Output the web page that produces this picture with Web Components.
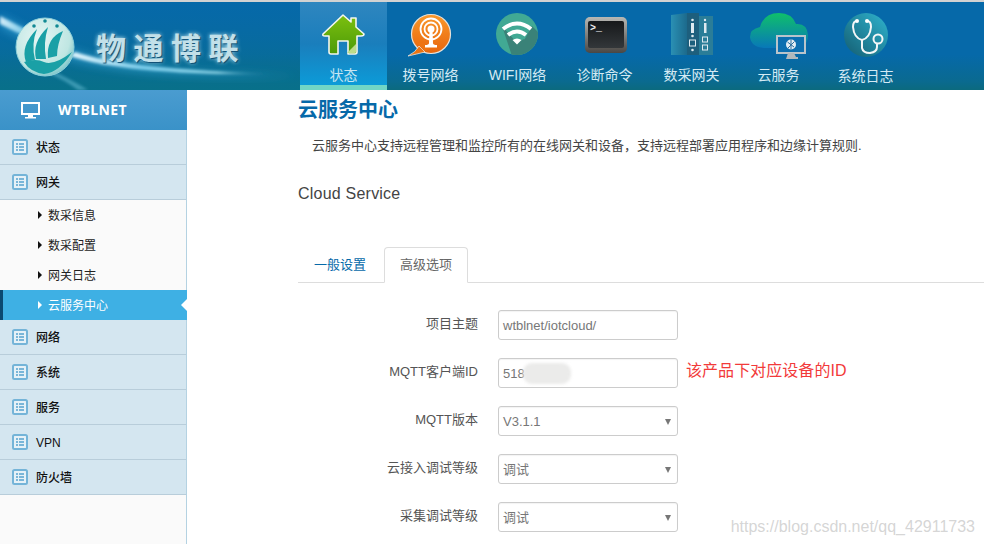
<!DOCTYPE html>
<html lang="zh">
<head>
<meta charset="utf-8">
<title>云服务中心</title>
<style>
  html, body { margin: 0; padding: 0; height: 100%; overflow: hidden; background: #fff; }
  body { font-family: "Liberation Sans", "Noto Sans CJK SC", sans-serif; }
</style>
</head>
<body>
<wt-app>
  <wt-header slot="header">
    <wt-nav-item label="状态" active>
      <svg viewBox="0 0 87 60" width="87" height="60">
        <defs><linearGradient id="h" x1="0" y1="0" x2="0" y2="1"><stop offset="0" stop-color="#7cc00f"/><stop offset="1" stop-color="#4c9a08"/></linearGradient></defs>
        <path d="M43 13 L51 20 V16 H56 V25 L64 32 Q64 34 61 34 H57 V50 Q57 52 55 52 H48 V39 H38 V52 H31 Q29 52 29 50 V34 H25 Q22 34 23 32 Z" fill="url(#h)" stroke="#f4f6ee" stroke-width="1.6" stroke-linejoin="round"/>
        <path d="M47 51 L56 42 V50 Q56 51 55 51 Z" fill="#bcdc8a"/>
      </svg>
    </wt-nav-item>
    <wt-nav-item label="拨号网络">
      <svg viewBox="0 0 87 60" width="87" height="60">
        <defs><linearGradient id="o" x1="0" y1="0" x2="0" y2="1"><stop offset="0" stop-color="#f9982a"/><stop offset="1" stop-color="#e8650c"/></linearGradient></defs>
        <circle cx="44" cy="32" r="19.500" fill="url(#o)" stroke="#e6e2da" stroke-width="1.200"/>
        <path d="M21 54 Q29 50 32 44 L38 50 Q30 52 21 54 Z" fill="#ee7412" stroke="#e6e2da" stroke-width=".8"/>
        <path d="M31 42 L38 49 L44 46 L33 38 Z" fill="#ee7412"/>
        <g fill="none" stroke="#fff" stroke-width="1.800">
          <circle cx="44" cy="27" r="10.500"/><circle cx="44" cy="27" r="6.500"/>
        </g>
        <circle cx="44" cy="27" r="3.500" fill="#fff"/>
        <path d="M42.500 28 H45.500 L46 41 Q46 43 50 43 V45.500 H38 V43 Q42 43 42 41 Z" fill="#fff"/>
      </svg>
    </wt-nav-item>
    <wt-nav-item label="WIFI网络">
      <svg viewBox="0 0 87 60" width="87" height="60">
        <clipPath id="wc"><circle cx="43" cy="32" r="21"/></clipPath>
        <circle cx="43" cy="32" r="21" fill="#41a994"/>
        <path d="M28 24 L43 41 L50 37 L70 55 L40 60 Z M58 24 L70 36 V56 L48 42 Z" fill="#3a8278" clip-path="url(#wc)"/>
        <g fill="none" stroke="#fff" stroke-linecap="butt">
          <path d="M29 27 Q43 16 57 27" stroke-width="4"/>
          <path d="M34 33 Q43 26 52 33" stroke-width="4"/>
        </g>
        <path d="M38.500 38 Q43 35 47.500 38 L43 42.500 Z" fill="#fff"/>
      </svg>
    </wt-nav-item>
    <wt-nav-item label="诊断命令">
      <svg viewBox="0 0 87 60" width="87" height="60">
        <defs><linearGradient id="t" x1="0" y1="0" x2="0" y2="1"><stop offset="0" stop-color="#b8b8b4"/><stop offset="1" stop-color="#4a4744"/></linearGradient>
        <linearGradient id="t2" x1="0" y1="0" x2="0" y2="1"><stop offset="0" stop-color="#16181a"/><stop offset="1" stop-color="#33373a"/></linearGradient></defs>
        <rect x="24" y="15" width="42" height="36" rx="5" fill="url(#t)"/>
        <rect x="27" y="19" width="36" height="27" rx="2" fill="url(#t2)"/>
        <text x="29" y="29" font-family="Liberation Mono" font-size="10" font-weight="700" fill="#eee">&gt;_</text>
      </svg>
    </wt-nav-item>
    <wt-nav-item label="数采网关">
      <svg viewBox="0 0 87 60" width="87" height="60">
        <defs><linearGradient id="g" x1="0" y1="0" x2="1" y2="0"><stop offset="0" stop-color="#2a90b4"/><stop offset="1" stop-color="#1c6a8c"/></linearGradient></defs>
        <path d="M23 13 L39 11 V53 L23 53 Z" fill="url(#g)"/>
        <rect x="39" y="11" width="12" height="42" fill="#1d5f7d"/>
        <rect x="51" y="14" width="14" height="39" fill="#2a7d98"/>
        <g fill="#dfeaf0">
          <rect x="43" y="21" width="3" height="10"/><circle cx="44.500" cy="18" r="1.300"/><circle cx="44.500" cy="34" r="1.300"/>
          <rect x="41.500" y="38" width="6" height="6" fill="none" stroke="#dfeaf0"/><circle cx="44.500" cy="48" r="1.300"/>
          <rect x="56" y="21" width="2.500" height="10"/><circle cx="57" cy="18" r="1.200"/>
          <rect x="54.500" y="35" width="5" height="5" fill="none" stroke="#dfeaf0"/><rect x="54.500" y="43" width="5" height="5" fill="none" stroke="#dfeaf0"/>
        </g>
      </svg>
    </wt-nav-item>
    <wt-nav-item label="云服务">
      <svg viewBox="0 0 87 60" width="87" height="60">
        <defs><linearGradient id="c" x1="0" y1="0" x2="0" y2="1"><stop offset="0" stop-color="#0fc06a"/><stop offset="1" stop-color="#0878b8"/></linearGradient></defs>
        <path d="M29 46 Q16 45 15 35 Q15 27 25 25 Q29 11 44 11 Q57 11 61 22 Q72 21 73 33 Q73 41 68 44 L43 46 Z" fill="url(#c)"/>
        <rect x="42" y="34" width="28" height="17" fill="#0c6fb0" stroke="#b9c4cb" stroke-width="2"/>
        <path d="M51 57 L53 51 H59 L61 55 H63 V57 Z" fill="#b0b8bc"/>
        <circle cx="56" cy="42.500" r="5" fill="#e4eef4"/>
        <path d="M52.500 40 L59 45 M59.500 39.500 L53 46 M56 37.500 V47.500" stroke="#2a6e9e" stroke-width="1"/>
      </svg>
    </wt-nav-item>
    <wt-nav-item label="系统日志" drop>
      <svg viewBox="0 0 87 60" width="87" height="60">
        <defs><linearGradient id="s" x1="0" y1="1" x2="1" y2="0"><stop offset="0" stop-color="#145c70"/><stop offset="1" stop-color="#2fb4cf"/></linearGradient></defs>
        <circle cx="44" cy="33" r="22" fill="url(#s)"/>
        <g fill="none" stroke="#f2f6f7" stroke-width="2">
          <path d="M35 19 Q31 19 31 25 Q32 36 40 38 Q48 36 49 25 Q49 19 45 19"/>
          <path d="M40 38 V46 Q41 51 48 51 Q55 50 55 45 V42"/>
          <circle cx="56" cy="37" r="4.500"/>
        </g>
        <circle cx="35" cy="19" r="2" fill="#fff"/><circle cx="45" cy="19" r="2" fill="#fff"/>
      </svg>
    </wt-nav-item>
  </wt-header>

  <wt-sidebar slot="sidebar" title="WTBLNET">
    <wt-menu-item>状态</wt-menu-item>
    <wt-menu-item>网关</wt-menu-item>
    <wt-sub-item>数采信息</wt-sub-item>
    <wt-sub-item>数采配置</wt-sub-item>
    <wt-sub-item>网关日志</wt-sub-item>
    <wt-sub-item active>云服务中心</wt-sub-item>
    <wt-menu-item>网络</wt-menu-item>
    <wt-menu-item>系统</wt-menu-item>
    <wt-menu-item>服务</wt-menu-item>
    <wt-menu-item>VPN</wt-menu-item>
    <wt-menu-item>防火墙</wt-menu-item>
  </wt-sidebar>

  <wt-content slot="content" heading="云服务中心" intro="云服务中心支持远程管理和监控所有的在线网关和设备，支持远程部署应用程序和边缘计算规则." section="Cloud Service">
    <wt-tabs first="一般设置" second="高级选项"></wt-tabs>
    <wt-form-row label="项目主题"><wt-field>wtblnet/iotcloud/</wt-field></wt-form-row>
    <wt-form-row label="MQTT客户端ID" note="该产品下对应设备的ID"><wt-field smudge>518</wt-field></wt-form-row>
    <wt-form-row label="MQTT版本"><wt-field select>V3.1.1</wt-field></wt-form-row>
    <wt-form-row label="云接入调试等级"><wt-field select>调试</wt-field></wt-form-row>
    <wt-form-row label="采集调试等级"><wt-field select>调试</wt-field></wt-form-row>
  </wt-content>
  <wt-watermark slot="overlay">https://blog.csdn.net/qq_42911733</wt-watermark>
</wt-app>

<script>
const CJK = `"Liberation Sans", "Noto Sans CJK SC", sans-serif`;

class WtApp extends HTMLElement {
  constructor() {
    super();
    this.attachShadow({ mode: "open" }).innerHTML = `
      <style>
        :host { display: grid; grid-template-columns: 187px 1fr; grid-template-rows: 88px 1fr; height: 544px; border-top: 2px solid #d2d2d2; box-sizing: border-box; position: relative; overflow: hidden; }
        .top { grid-column: 1 / 3; }
        .main { min-width: 0; }
      </style>
      <div class="top"><slot name="header"></slot></div>
      <slot name="sidebar"></slot>
      <div class="main"><slot name="content"></slot></div>
      <slot name="overlay"></slot>`;
  }
}

class WtHeader extends HTMLElement {
  constructor() {
    super();
    this.attachShadow({ mode: "open" }).innerHTML = `
      <style>
        :host { display: flex; height: 88px; position: relative; background: linear-gradient(#0669a9 0, #0669a9 60%, #0a6a90 90%, #0b6a7e 100%); }
        .logo { width: 300px; flex: none; position: relative; }
        .logo svg { display: block; }
        .brand { position: absolute; left: 96px; top: 24px; font: 700 30px/40px "Noto Sans CJK SC", sans-serif; letter-spacing: 7.500px; color: #c2e0e9; white-space: nowrap; text-shadow: 1px 1px 1px #0a4a70, 0 0 4px #d0eef5; }
        nav { display: flex; }
      </style>
      <div class="logo">
        <svg viewBox="0 0 300 88" width="300" height="88">
          <defs>
            <linearGradient id="sw" x1="0" y1="0" x2="1" y2="0">
              <stop offset="0" stop-color="#e8f8ff"/><stop offset=".35" stop-color="#7fd0ee"/><stop offset=".7" stop-color="#a0e0f0"/><stop offset="1" stop-color="#0a6a90" stop-opacity="0"/>
            </linearGradient>
            <radialGradient id="ball" cx=".4" cy=".35" r=".75">
              <stop offset="0" stop-color="#e6f6f4"/><stop offset=".7" stop-color="#bfe6e2"/><stop offset="1" stop-color="#5fb8c0"/>
            </radialGradient>
            <linearGradient id="bot" x1="0" y1="0" x2="0" y2="1"><stop offset="0" stop-color="#0a6a9e" stop-opacity="0"/><stop offset="1" stop-color="#08708a"/></linearGradient>
            <filter id="bl"><feGaussianBlur stdDeviation="1.500"/></filter>
            <filter id="bl2"><feGaussianBlur stdDeviation="4"/></filter>
          </defs>
          <rect width="300" height="88" fill="url(#bot)"/>
          <path d="M0 12 Q50 40 80 50 Q140 70 300 74 Q140 78 70 58 Q30 42 0 26 Z" fill="#38a6d8" opacity=".55" filter="url(#bl2)"/>
          <path d="M0 14 Q40 36 75 46 L70 50 Q30 38 0 22 Z" fill="url(#sw)" opacity=".9" filter="url(#bl)"/>
          <path d="M75 50 Q130 68 280 72 Q130 74 70 54 Z" fill="url(#sw)" filter="url(#bl)"/>
          <path d="M55 70 Q75 80 88 88 H78 Q65 78 50 72 Z" fill="#6fc4dc" opacity=".5" filter="url(#bl)"/>
          <circle cx="45" cy="45" r="29" fill="url(#ball)" stroke="#8fd0da" stroke-width="1"/>
          <g fill="#1aa0a6">
            <path d="M26 60 Q20 44 37 27 Q31 42 35 58 Z" />
            <path d="M36 57 Q32 40 48 25 Q43 41 46 57 Z"/>
            <path d="M48 56 Q46 36 63 29 Q57 43 57 54 Z"/>
            <path d="M24 60 Q36 56 44 60 Q54 64 72 50 Q60 70 44 72 Q30 70 24 60 Z"/>
          </g>
          <g fill="#128a94"><circle cx="34" cy="24" r="1.800"/><circle cx="45" cy="19" r="1.800"/><circle cx="57" cy="24" r="1.800"/></g>
        </svg>
        <div class="brand">物通博联</div>
      </div>
      <nav><slot></slot></nav>`;
  }
}

class WtNavItem extends HTMLElement {
  constructor() {
    super();
    this.attachShadow({ mode: "open" }).innerHTML = `
      <style>
        :host { display: flex; flex-direction: column; align-items: center; width: 87px; height: 88px; box-sizing: border-box; color: #d4eaf4; font: 14px/18px ${CJK}; }
        :host([active]) { background: linear-gradient(180deg, #2f86bf 0, #1a7ebc 50%, #0c9bd8 83px); border-bottom: 5px solid #70d6c6; color: #c8e6f2; }
        ::slotted(svg) { display: block; }
        .label { margin-top: 4px; white-space: nowrap; }
        :host([drop]) .label { margin-top: 5px; }
        .icon { height: 60px; }
      </style>
      <div class="icon"><slot></slot></div>
      <div class="label"></div>`;
  }
  connectedCallback() {
    this.shadowRoot.querySelector(".label").textContent = this.getAttribute("label");
  }
}

class WtSidebar extends HTMLElement {
  constructor() {
    super();
    this.attachShadow({ mode: "open" }).innerHTML = `
      <style>
        :host { display: block; background: #fafafa; border-right: 1px solid #b4d2e2; box-sizing: border-box; width: 187px; }
        .head { display: flex; align-items: center; height: 40px; margin-right: -1px; padding-left: 21px; gap: 18px; background: linear-gradient(#4a9cd0, #3a92c8); color: #fff; font: 700 14px/1 "Open Sans", sans-serif; letter-spacing: .4px; box-sizing: border-box; }
        svg { display: block; }
      </style>
      <div class="head">
        <svg width="19" height="17" viewBox="0 0 19 17"><path d="M1 1 H18 V12 H1 Z" fill="none" stroke="#fff" stroke-width="2"/><path d="M7 13 H12 V15 H15 V16.500 H4 V15 H7 Z" fill="#fff"/></svg>
        <span class="title"></span>
      </div>
      <slot></slot>`;
  }
  connectedCallback() {
    this.shadowRoot.querySelector(".title").textContent = this.getAttribute("title");
  }
}

class WtMenuItem extends HTMLElement {
  constructor() {
    super();
    this.attachShadow({ mode: "open" }).innerHTML = `
      <style>
        :host { display: flex; align-items: center; height: 35px; box-sizing: border-box; padding-left: 12px; gap: 8px; background: #d4e6f0; border-bottom: 1px solid #b8cdda; color: #111; font: 500 12px/1 ${CJK}; }
        svg { display: block; flex: none; }
        span { margin-top: 2px; }
      </style>
      <svg width="16" height="16" viewBox="0 0 16 16">
        <rect x="1" y="1" width="14" height="14" rx="1.500" fill="#e6f1f7" stroke="#74b4d8" stroke-width="2"/>
        <g fill="#7ab6d8"><rect x="4" y="4" width="2" height="2"/><rect x="7" y="4" width="5" height="2"/><rect x="4" y="7" width="2" height="2"/><rect x="7" y="7" width="5" height="2"/><rect x="4" y="10" width="2" height="2"/><rect x="7" y="10" width="5" height="2"/></g>
      </svg>
      <span><slot></slot></span>`;
  }
}

class WtSubItem extends HTMLElement {
  constructor() {
    super();
    this.attachShadow({ mode: "open" }).innerHTML = `
      <style>
        :host { display: flex; align-items: center; height: 30px; box-sizing: border-box; padding-left: 38px; gap: 6px; color: #222; font: 12px/1 ${CJK}; position: relative; }
        .text { margin-top: 2px; }
        .tri { width: 0; height: 0; border-left: 4px solid #111; border-top: 4px solid transparent; border-bottom: 4px solid transparent; }
        :host([active]) { background: #3eb0e4; color: #fff; padding-left: 35px; border-left: 3px solid #0b4a72; margin-right: -1px; }
        :host([active]) .tri { border-left-color: #fff; }
        .notch { display: none; position: absolute; right: 0; top: 9px; border-right: 6px solid #fff; border-top: 6px solid transparent; border-bottom: 6px solid transparent; }
        :host([active]) .notch { display: block; }
      </style>
      <span class="tri"></span><span class="text"><slot></slot></span><span class="notch"></span>`;
  }
}

class WtContent extends HTMLElement {
  constructor() {
    super();
    this.attachShadow({ mode: "open" }).innerHTML = `
      <style>
        :host { display: block; padding-left: 111px; color: #444; font-family: ${CJK}; }
        h1 { margin: 0; padding-top: 6px; font: 700 20px/28px ${CJK}; color: #0669a9; }
        p { margin: 13px 0 0 14px; font-size: 13px; line-height: 18px; color: #444; white-space: nowrap; }
        h2 { margin: 29px 0 0; font: 400 16px/20px "Liberation Sans", sans-serif; letter-spacing: .22px; color: #444; }
      </style>
      <h1></h1><p></p><h2></h2>
      <slot></slot>`;
  }
  connectedCallback() {
    const r = this.shadowRoot;
    r.querySelector("h1").textContent = this.getAttribute("heading");
    r.querySelector("p").textContent = this.getAttribute("intro");
    r.querySelector("h2").textContent = this.getAttribute("section");
  }
}

class WtTabs extends HTMLElement {
  constructor() {
    super();
    this.attachShadow({ mode: "open" }).innerHTML = `
      <style>
        :host { display: flex; align-items: flex-end; height: 36px; margin: 42px 0 27px; border-bottom: 1px solid #ddd; font: 13px/1 ${CJK}; box-sizing: content-box; }
        .tab { box-sizing: border-box; padding: 0 15px 2px; height: 36px; display: flex; align-items: center; color: #0669a9; border: 1px solid transparent; margin-bottom: -1px; margin-right: 2px; }
        .on { color: #666; background: #fff; border-color: #ddd; border-bottom-color: #fff; border-radius: 4px 4px 0 0; }
      </style>
      <div class="tab"></div><div class="tab on"></div>`;
  }
  connectedCallback() {
    const t = this.shadowRoot.querySelectorAll(".tab");
    t[0].textContent = this.getAttribute("first");
    t[1].textContent = this.getAttribute("second");
  }
}

class WtFormRow extends HTMLElement {
  constructor() {
    super();
    this.attachShadow({ mode: "open" }).innerHTML = `
      <style>
        :host { display: grid; grid-template-columns: 180px 180px auto; column-gap: 20px; align-items: center; height: 30px; margin-bottom: 18px; }
        .label { text-align: right; font: 13px/18px ${CJK}; color: #555; margin-top: -2px; white-space: nowrap; }
        .note { margin-left: -12px; margin-top: -5px; font: 16px/20px ${CJK}; color: #f23a3a; white-space: nowrap; letter-spacing: .05px; }
      </style>
      <div class="label"></div><slot></slot><div class="note"></div>`;
  }
  connectedCallback() {
    const r = this.shadowRoot;
    r.querySelector(".label").textContent = this.getAttribute("label");
    r.querySelector(".note").textContent = this.getAttribute("note") || "";
  }
}

class WtField extends HTMLElement {
  constructor() {
    super();
    this.attachShadow({ mode: "open" }).innerHTML = `
      <style>
        :host { display: flex; align-items: center; position: relative; box-sizing: border-box; width: 180px; height: 30px; padding: 0 4px; background: #fff; border: 1px solid #ccc; border-radius: 3px; color: #777; font: 13px/1 ${CJK}; box-shadow: inset 0 1px 1px rgba(0,0,0,.05); }
        .arrow { display: none; position: absolute; right: 6px; top: 12px; border-top: 6px solid #777; border-left: 3px solid transparent; border-right: 3px solid transparent; }
        :host([select]) .arrow { display: block; }
        .smudge { display: none; position: absolute; left: 24px; top: 4px; width: 48px; height: 21px; background: #ebebea; border-radius: 9px; filter: blur(1.500px); }
        :host([smudge]) .smudge { display: block; }
      </style>
      <slot></slot><span class="arrow"></span><span class="smudge"></span>`;
  }
}

class WtWatermark extends HTMLElement {
  constructor() {
    super();
    this.attachShadow({ mode: "open" }).innerHTML = `
      <style>
        :host { position: absolute; right: 9px; bottom: 7px; font: 16px/20px "Liberation Sans", sans-serif; color: rgba(190,190,190,.65); white-space: nowrap; text-shadow: 0 0 1px rgba(255,255,255,.8); }
      </style>
      <slot></slot>`;
  }
}

customElements.define("wt-app", WtApp);
customElements.define("wt-header", WtHeader);
customElements.define("wt-nav-item", WtNavItem);
customElements.define("wt-sidebar", WtSidebar);
customElements.define("wt-menu-item", WtMenuItem);
customElements.define("wt-sub-item", WtSubItem);
customElements.define("wt-content", WtContent);
customElements.define("wt-tabs", WtTabs);
customElements.define("wt-form-row", WtFormRow);
customElements.define("wt-field", WtField);
customElements.define("wt-watermark", WtWatermark);
</script>
</body>
</html>
